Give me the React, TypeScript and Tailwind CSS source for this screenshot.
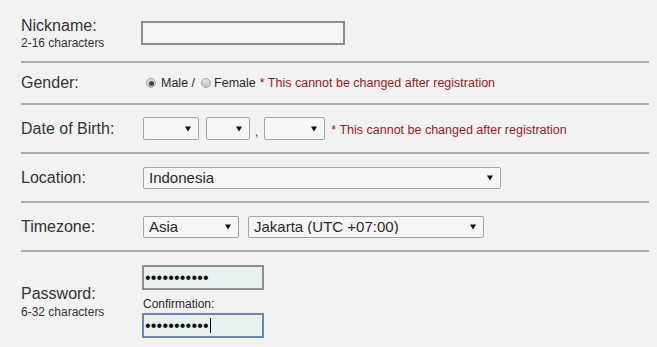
import type { ReactNode } from 'react'

const font = { fontFamily: '"Liberation Sans", Arial, sans-serif' }

function Arrow() {
  return (
    <svg width="6" height="6" viewBox="0 0 6 6" className="shrink-0">
      <polygon points="0,0.5 6,0.5 3,5.5" fill="#111" />
    </svg>
  )
}

function FakeSelect({ className, value }: { className: string; value?: string }) {
  return (
    <div className={`flex items-center justify-between border border-[#a5a5a5] rounded-[2px] bg-[#f6f6f6] pl-[5px] pr-[7px] ${className}`}>
      <span className="text-[15px] text-[#2a2a2a] leading-none truncate">{value}</span>
      <Arrow />
    </div>
  )
}

function Radio({ checked }: { checked?: boolean }) {
  return (
    <span className="w-[10px] h-[10px] rounded-full border border-[#a8a8a8] bg-gradient-to-b from-[#e4e4e4] to-[#c4c4c4] flex items-center justify-center shrink-0">
      {checked && <span className="w-[5px] h-[5px] rounded-full bg-[#444]" />}
    </span>
  )
}

function Row({ label, sub, className, children }: { label: string; sub?: string; className: string; children: ReactNode }) {
  return (
    <div className={`flex items-center border-b-2 border-[#acacac] ${className}`}>
      <div className="w-[120px] shrink-0 text-[#333]">
        <div className="text-[16px] leading-[18px]">{label}</div>
        {sub && <div className="text-[12px] leading-[14px] mt-[1px]">{sub}</div>}
      </div>
      <div className="flex-1">{children}</div>
    </div>
  )
}

const Note = () => (
  <span className="text-[12.5px] text-[#951c1c]">* This cannot be changed after registration</span>
)

export default function App() {
  return (
    <div className="w-[657px] h-[347px] bg-[#f2f2f2] overflow-hidden" style={font}>
      <div className="ml-[21px] w-[628px]">
        <Row label="Nickname:" sub="2-16 characters" className="h-[63px] pt-[5px]">
          <div className="w-[204px] h-[24px] border-2 border-[#8e8e8e] bg-[#f5f5f5]" />
        </Row>

        <Row label="Gender:" className="h-[42px]">
          <div className="flex items-center ml-[5px] text-[12.5px] text-[#2a2a2a]">
            <Radio checked />
            <span className="ml-[5px]">Male /</span>
            <span className="ml-[6px]"><Radio /></span>
            <span className="ml-[3px]">Female</span>
            <span className="ml-[4px]"><Note /></span>
          </div>
        </Row>

        <Row label="Date of Birth:" className="h-[49px]">
          <div className="flex items-center ml-[2px]">
            <FakeSelect className="w-[56px] h-[23px]" />
            <FakeSelect className="w-[44px] h-[23px] ml-[7px]" />
            <span className="text-[12px] text-[#444] mx-[5px] mt-[6px]">,</span>
            <FakeSelect className="w-[61px] h-[23px] ml-[1px]" />
            <span className="ml-[6px]"><Note /></span>
          </div>
        </Row>

        <Row label="Location:" className="h-[49px]">
          <FakeSelect className="w-[358px] h-[22px] ml-[2px]" value="Indonesia" />
        </Row>

        <Row label="Timezone:" className="h-[49px]">
          <div className="flex items-center ml-[2px] gap-[9px]">
            <FakeSelect className="w-[96px] h-[22px]" value="Asia" />
            <FakeSelect className="w-[236px] h-[22px]" value="Jakarta (UTC +07:00)" />
          </div>
        </Row>

        <div className="flex items-start pt-[13px]">
          <div className="w-[120px] shrink-0 text-[#333] mt-[20px]">
            <div className="text-[16px] leading-[18px]">Password:</div>
            <div className="text-[12px] leading-[14px] mt-[2px]">6-32 characters</div>
          </div>
          <div className="ml-[1px]">
            <div className="w-[122px] h-[25px] border-2 border-[#8e8e8e] bg-[#e9f0f0] flex items-center pl-[1px]">
              <span className="text-[16px] leading-none text-[#111] tracking-[0.2px]">•••••••••••</span>
            </div>
            <div className="text-[12px] leading-[14px] text-[#2a2a2a] mt-[7px] mb-[2px] ml-[1px]">Confirmation:</div>
            <div className="w-[122px] h-[25px] border-2 border-[#6f88a8] bg-[#e9f0f0] flex items-center pl-[1px]">
              <span className="text-[16px] leading-none text-[#111] tracking-[0.2px]">•••••••••••</span>
              <span className="w-[1px] h-[15px] bg-black ml-[1px]" />
            </div>
          </div>
        </div>
      </div>
    </div>
  )
}
